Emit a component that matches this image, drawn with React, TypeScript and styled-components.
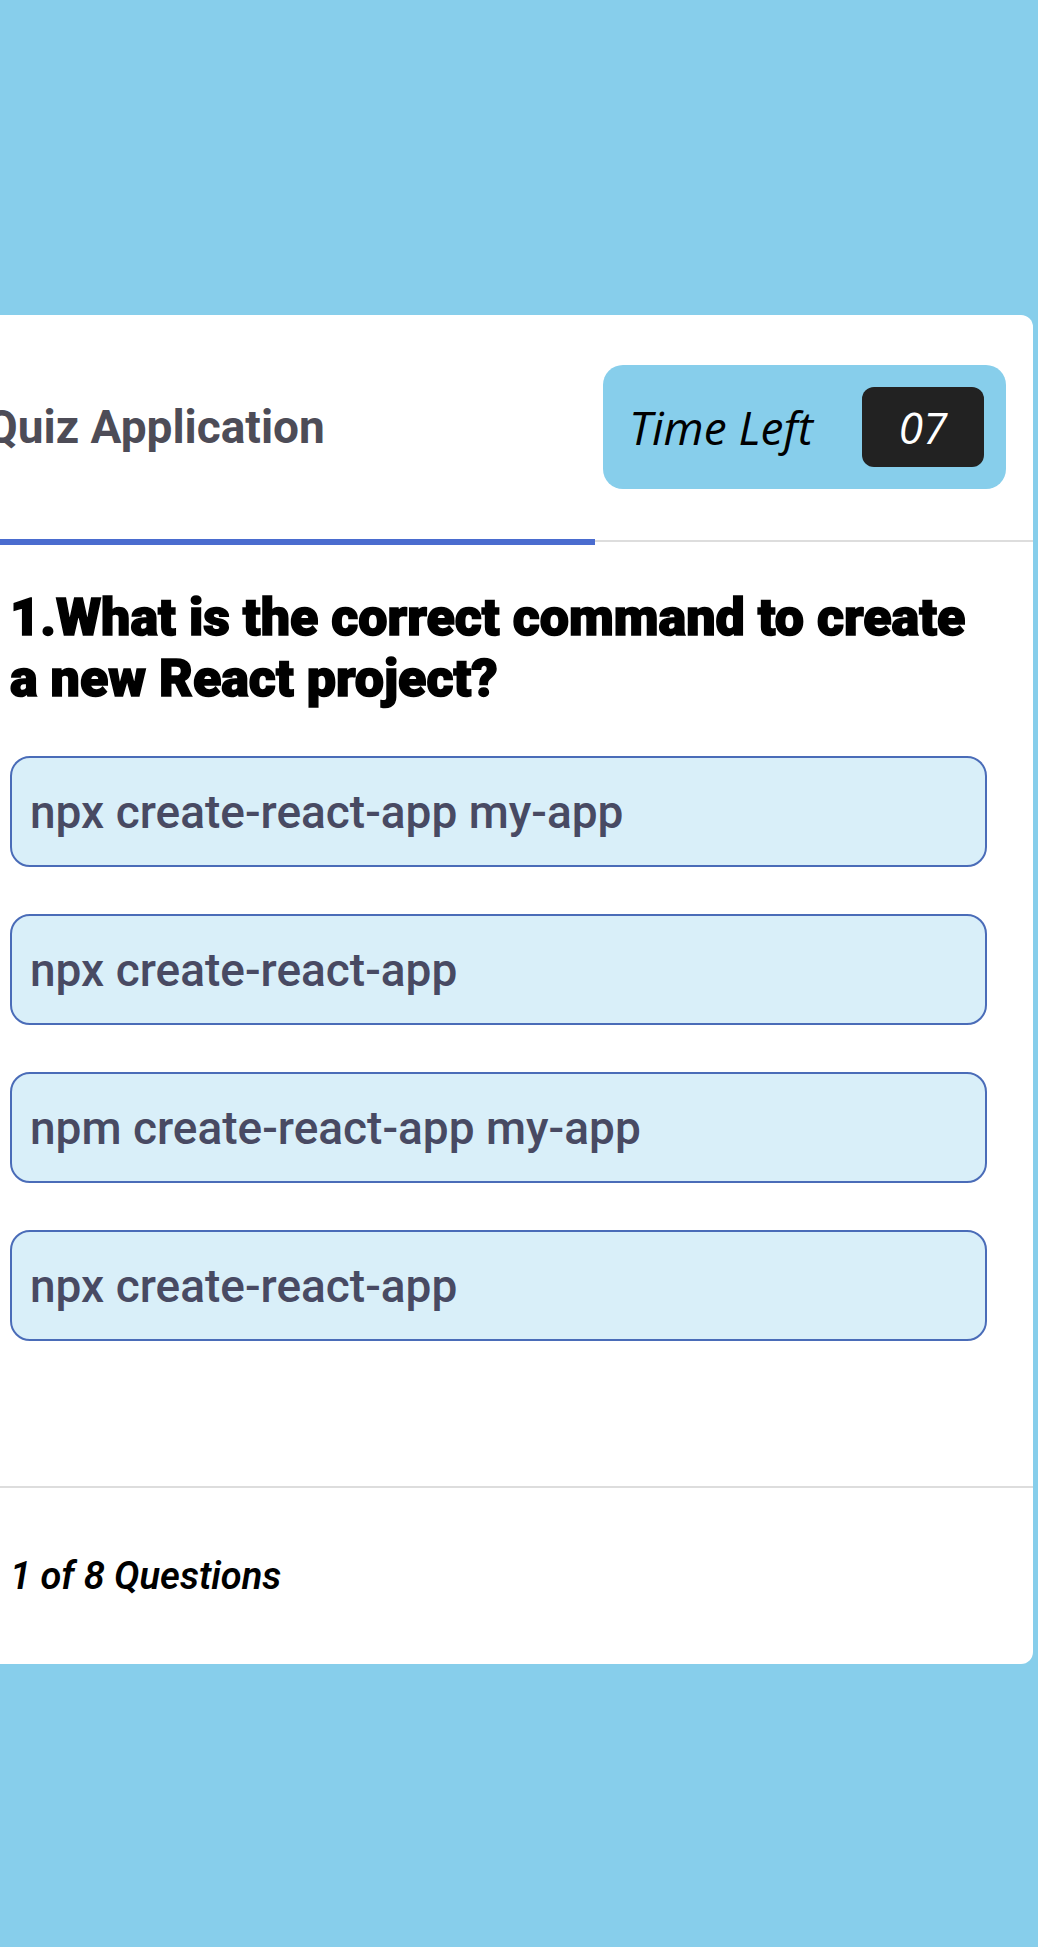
import React from 'react';
import styled, {createGlobalStyle} from "styled-components";

const GlobalStyle = createGlobalStyle`
    html, body {
        margin: 0;
        padding: 0;
        background-color: #87ceeb;
    }

    * {
        box-sizing: border-box;
    }
`

type OptionType = {
    id: number
    text: string
}

const options: OptionType[] = [
    {id: 1, text: "npx create-react-app my-app"},
    {id: 2, text: "npx create-react-app"},
    {id: 3, text: "npm create-react-app my-app"},
    {id: 4, text: "npx create-react-app"},
]

const timeLeft = 7

export default function App() {
    // полоса прогресса показывает сколько времени уже прошло
    const progress = 59.2

    return (
        <>
            <GlobalStyle/>
            <Page>
                <Card>
                    <Header>
                        <Title>Quiz Application</Title>
                        <Timer>
                            <TimerLabel>Time Left</TimerLabel>
                            <TimerValue>{String(timeLeft).padStart(2, "0")}</TimerValue>
                        </Timer>
                    </Header>

                    <Track>
                        <TrackFill $progress={progress}/>
                    </Track>

                    <Body>
                        <Question>1.What is the correct command to create a new React project?</Question>
                        <OptionList>
                            {options.map(o => (
                                <Option key={o.id}>{o.text}</Option>
                            ))}
                        </OptionList>
                    </Body>

                    <Footer>
                        <Counter>1 of 8 Questions</Counter>
                    </Footer>
                </Card>
            </Page>
        </>
    );
}

const Page = styled.div`
    min-height: 1947px;
    padding-top: 315px;
`

const Card = styled.div`
    width: 1073px;
    margin-left: -40px; // карточка шире экрана, левый край уходит за границу
    background-color: #ffffff;
    border-radius: 12px;
`

const Header = styled.header`
    display: flex;
    justify-content: space-between;
    align-items: center;
    padding: 50px 27px 50px 26px;
`

const Title = styled.h1`
    margin: 0;
    font-family: Roboto, "Liberation Sans", sans-serif;
    font-weight: 700;
    font-size: 46px;
    color: #4d4c57;
`

const Timer = styled.div`
    display: flex;
    align-items: center;
    gap: 49px;
    height: 124px;
    padding: 0 22px 0 26px;
    background-color: #87ceeb;
    border-radius: 20px;
`

const TimerLabel = styled.span`
    font-family: "Open Sans", "Noto Sans", sans-serif;
    font-style: italic;
    font-size: 46px;
    color: #000000;
`

const TimerValue = styled.span`
    display: flex;
    align-items: center;
    justify-content: center;
    width: 122px;
    height: 80px;
    background-color: #222222;
    border-radius: 12px;
    font-family: "Open Sans", "Noto Sans", sans-serif;
    font-style: italic;
    font-size: 44px;
    color: #ffffff;
`

const Track = styled.div`
    position: relative;
    height: 2px;
    margin-top: 1px;
    background-color: #dddddd;
`

const TrackFill = styled.div<{ $progress: number }>`
    position: absolute;
    left: 0;
    top: -1px;
    height: 6px;
    width: ${props => props.$progress}%;
    background-color: #4a6ccf;
`

const Body = styled.main`
    padding: 45px 46px 145px 50px;
`

const Question = styled.h2`
    margin: 0 0 47px;
    font-family: Roboto, "Liberation Sans", sans-serif;
    font-weight: 900;
    font-size: 52px;
    line-height: 61px;
    color: #000000;
    -webkit-text-stroke: 1.5px #000000; // делаем шрифт жирнее, как Black
`

const OptionList = styled.div`
    display: flex;
    flex-direction: column;
    gap: 47px;
`

const Option = styled.button`
    display: flex;
    align-items: center;
    height: 111px;
    padding: 0 18px;
    background-color: #d9eff9;
    border: 2px solid #4a6cb8;
    border-radius: 20px;
    font-family: Roboto, "Liberation Sans", sans-serif;
    font-weight: 500;
    font-size: 46px;
    color: #484a63;
    text-align: left;
    cursor: pointer;
`

const Footer = styled.footer`
    display: flex;
    align-items: center;
    height: 178px;
    padding-left: 50px;
    border-top: 2px solid #dddddd;
`

const Counter = styled.span`
    font-family: Roboto, "Liberation Sans", sans-serif;
    font-style: italic;
    font-weight: 600;
    font-size: 38px;
    color: #000000;
`
